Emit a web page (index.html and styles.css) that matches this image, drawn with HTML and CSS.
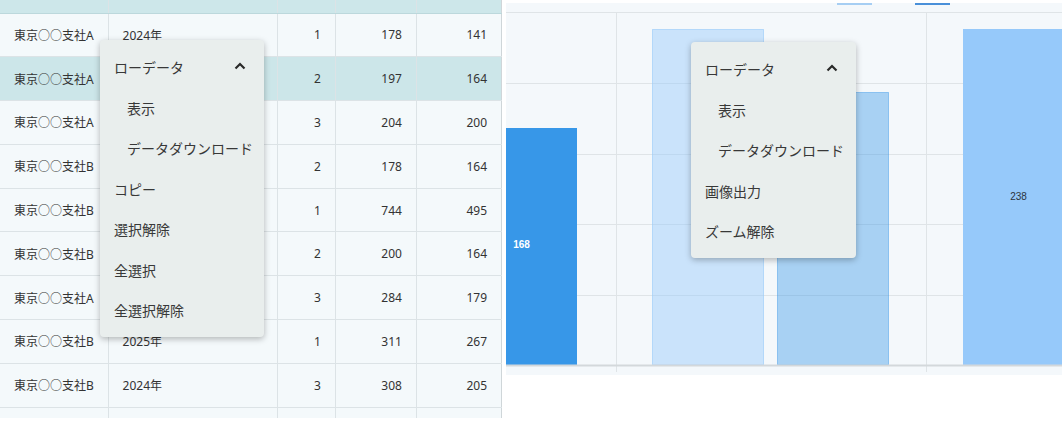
FILE: index.html
```html
<!DOCTYPE html>
<html lang="ja">
<head>
<meta charset="UTF-8">
<meta name="viewport" content="width=device-width, initial-scale=1.0">
<title>集計</title>
<link rel="stylesheet" href="styles.css">
</head>
<body>
<div class="page">
  <div class="grid-panel">
    <table class="grid">
      <colgroup>
        <col style="width:108px"><col style="width:169px"><col style="width:58px"><col style="width:81px"><col style="width:85px">
      </colgroup>
      <tr class="head"><th></th><th></th><th></th><th></th><th></th></tr>
      <tr><td>東京○○支社A</td><td>2024年</td><td class="num">1</td><td class="num">178</td><td class="num">141</td></tr>
      <tr class="selected"><td>東京○○支社A</td><td>2025年</td><td class="num">2</td><td class="num">197</td><td class="num">164</td></tr>
      <tr><td>東京○○支社A</td><td>2024年</td><td class="num">3</td><td class="num">204</td><td class="num">200</td></tr>
      <tr><td>東京○○支社B</td><td>2025年</td><td class="num">2</td><td class="num">178</td><td class="num">164</td></tr>
      <tr><td>東京○○支社B</td><td>2024年</td><td class="num">1</td><td class="num">744</td><td class="num">495</td></tr>
      <tr><td>東京○○支社B</td><td>2025年</td><td class="num">2</td><td class="num">200</td><td class="num">164</td></tr>
      <tr><td>東京○○支社A</td><td>2025年</td><td class="num">3</td><td class="num">284</td><td class="num">179</td></tr>
      <tr><td>東京○○支社B</td><td>2025年</td><td class="num">1</td><td class="num">311</td><td class="num">267</td></tr>
      <tr><td>東京○○支社B</td><td>2024年</td><td class="num">3</td><td class="num">308</td><td class="num">205</td></tr>
      <tr><td></td><td></td><td class="num"></td><td class="num"></td><td class="num"></td></tr>
    </table>
  </div>

  <div class="chart-panel">
    <svg class="chart" width="556" height="372" viewBox="0 0 556 372">
      <rect x="331" y="0" width="35" height="2" fill="#a6cef3"/>
      <rect x="409" y="0" width="35" height="2" fill="#4a90d9"/>
      <g stroke="#dfe4e7" stroke-width="1">
        <line x1="0" y1="9.5" x2="556" y2="9.5"/>
        <line x1="0" y1="80.5" x2="556" y2="80.5"/>
        <line x1="0" y1="151.5" x2="556" y2="151.5"/>
        <line x1="0" y1="221.5" x2="556" y2="221.5"/>
        <line x1="0" y1="292.5" x2="556" y2="292.5"/>
        <line x1="110.5" y1="9" x2="110.5" y2="369"/>
        <line x1="420.5" y1="9" x2="420.5" y2="369"/>
      </g>
      <rect x="-40" y="125" width="111" height="237" fill="#3797e8"/>
      <rect x="146.5" y="26.5" width="111" height="335.5" fill="#96c9fa" fill-opacity="0.45" stroke="#96c9fa" stroke-opacity="0.6"/>
      <rect x="271.5" y="89.5" width="111" height="272.5" fill="#3797e8" fill-opacity="0.4" stroke="#3797e8" stroke-opacity="0.45"/>
      <rect x="457" y="26" width="111" height="336" fill="#96c9fa"/>
      <line x1="0" y1="362.5" x2="556" y2="362.5" stroke="#d3d8db" stroke-width="2"/>
      <text x="15.5" y="244.5" class="bar-label light">168</text>
      <text x="512.5" y="196.5" class="bar-label">238</text>
    </svg>
  </div>
</div>

<div class="menu menu-grid">
  <div class="menu-item">ローデータ
    <svg class="chev" width="12" height="8" viewBox="0 0 12 8"><path d="M1.5 6.5 L6 2 L10.5 6.5" fill="none" stroke="#2a2a2a" stroke-width="2.2"/></svg>
  </div>
  <div class="menu-item sub">表示</div>
  <div class="menu-item sub">データダウンロード</div>
  <div class="menu-item">コピー</div>
  <div class="menu-item">選択解除</div>
  <div class="menu-item">全選択</div>
  <div class="menu-item">全選択解除</div>
</div>

<div class="menu menu-chart">
  <div class="menu-item">ローデータ
    <svg class="chev" width="12" height="8" viewBox="0 0 12 8"><path d="M1.5 6.5 L6 2 L10.5 6.5" fill="none" stroke="#2a2a2a" stroke-width="2.2"/></svg>
  </div>
  <div class="menu-item sub">表示</div>
  <div class="menu-item sub">データダウンロード</div>
  <div class="menu-item">画像出力</div>
  <div class="menu-item">ズーム解除</div>
</div>
</body>
</html>
```

FILE: styles.css
```css
body {
  margin: 0;
  background: #fff;
  font-family: "Noto Sans", "Noto Sans CJK JP", sans-serif;
  color: #333;
}

.page {
  display: flex;
  align-items: flex-start;
  gap: 4px;
}

.grid-panel {
  width: 502px;
  height: 418px;
  overflow: hidden;
  flex: none;
}

.grid {
  border-collapse: collapse;
  table-layout: fixed;
  width: 502px;
  font-size: 12px;
}

.grid th,
.grid td {
  border: 1px solid #dce3e6;
  padding: 0 14px;
  white-space: nowrap;
  text-align: left;
  background: #f4f9fb;
}

.grid tr {
  height: 43.8px;
}

.grid tr.head {
  height: 13px;
}

.grid tr.head th {
  background: #cde7ea;
  border-top: none;
  border-bottom-color: #bcd8dc;
}

.grid tr.selected td {
  background: #cce6e9;
}

.grid td:first-child,
.grid th:first-child {
  border-left: none;
}

.grid td:last-child,
.grid th:last-child {
  border-right: 1px solid #cfd6d9;
}

.grid .num {
  text-align: right;
}

.chart-panel {
  flex: 1;
  margin-top: 3px;
  height: 372px;
  overflow: hidden;
  background: #f4f8fb;
}

.chart {
  display: block;
}

.bar-label {
  font-family: "Liberation Sans", sans-serif;
  font-size: 10px;
  text-anchor: middle;
  fill: #2b3440;
}

.bar-label.light {
  fill: #fff;
  font-weight: bold;
}

.menu {
  position: absolute;
  background: #e9eeed;
  border-radius: 4px;
  box-shadow: 0 2px 6px rgba(0, 0, 0, 0.28);
  padding: 7px 0 6px;
  font-size: 14px;
  color: #383838;
}

.menu-grid {
  left: 100px;
  top: 40px;
  width: 164px;
}

.menu-chart {
  left: 691px;
  top: 42px;
  width: 165px;
}

.menu-item {
  height: 40.5px;
  display: flex;
  align-items: center;
  padding-left: 14px;
  position: relative;
  white-space: nowrap;
}

.menu-item.sub {
  padding-left: 27px;
}

.chev {
  position: absolute;
  right: 18px;
  top: 15px;
}
```
